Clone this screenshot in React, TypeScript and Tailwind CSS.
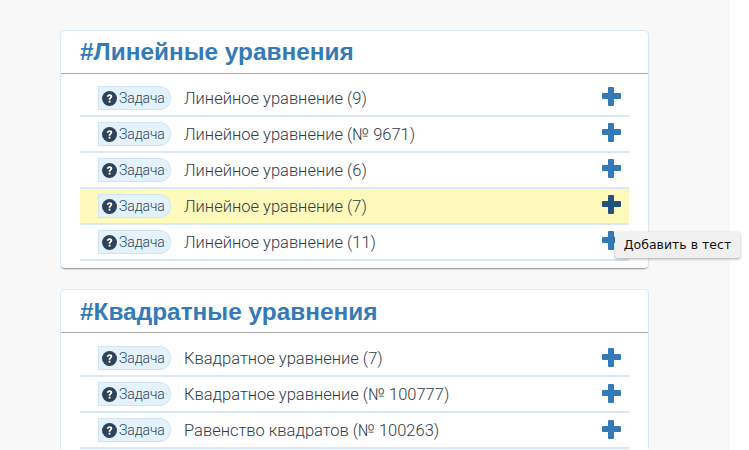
type Task = { title: string; active?: boolean };

const linear: Task[] = [
  { title: 'Линейное уравнение (9)' },
  { title: 'Линейное уравнение (№ 9671)' },
  { title: 'Линейное уравнение (6)' },
  { title: 'Линейное уравнение (7)', active: true },
  { title: 'Линейное уравнение (11)' },
];

const quadratic: Task[] = [
  { title: 'Квадратное уравнение (7)' },
  { title: 'Квадратное уравнение (№ 100777)' },
  { title: 'Равенство квадратов (№ 100263)' },
];

function QuestionIcon() {
  return (
    <svg viewBox="0 0 14 14" className="h-[15px] w-[15px] shrink-0">
      <circle cx="7" cy="7" r="7" fill="#2f4358" />
      <path d="M4.5 5.4c.1-1.5 1.2-2.3 2.6-2.3 1.4 0 2.5.8 2.5 2 0 1.8-1.8 1.7-1.8 3.1H6.2c0-2 1.5-2 1.5-3 0-.4-.3-.7-.7-.7-.5 0-.7.4-.8.9H4.500z" fill="#fff" />
      <rect x="6.200" y="9.100" width="1.700" height="1.700" fill="#fff" />
    </svg>
  );
}

function Plus({ dark, low }: { dark?: boolean; low?: boolean }) {
  const color = dark ? 'bg-[#23527c]' : 'bg-[#337ab7]';
  return (
    <div className={`relative h-[19px] w-[19px] ${low ? 'mb-[1px]' : 'mb-[3px]'}`}>
      <div className={`absolute left-0 top-[6px] h-[6px] w-[19px] rounded-[1px] ${color}`} />
      <div className={`absolute left-[6px] top-0 h-[19px] w-[6px] rounded-[1px] ${color}`} />
    </div>
  );
}

function Row({ task, low }: { task: Task; low?: boolean }) {
  return (
    <li
      className={`flex h-9 items-center border-b-2 border-[#d9e8f5] pl-[18px] pr-[8px] ${
        task.active ? 'bg-[#fdfabc]' : ''
      }`}
    >
      <span className="flex h-6 w-[73px] shrink-0 items-center gap-[2px] rounded-l-[3px] rounded-r-full border border-[#cfe4f5] bg-[#e3f2fd] pl-[3px] font-['Roboto',sans-serif] text-[14px] font-light tracking-[-0.1px] text-[#2f4358]">
        <QuestionIcon />
        Задача
      </span>
      <span className="ml-[13px] flex-1 pt-[2px] font-['Roboto',sans-serif] text-[16.5px] font-light text-[#2f3b48]">
        {task.title}
      </span>
      <Plus dark={task.active} low={low} />
    </li>
  );
}

function Card({ title, tasks, open }: { title: string; tasks: Task[]; open?: boolean }) {
  return (
    <section
      className={`w-[589px] border-x border-t border-[#d9e8f5] bg-white ${
        open ? 'rounded-t-[5px]' : 'rounded-[5px] border-b border-b-[#a9a9a9] pb-[7px] shadow-[0_1px_1px_rgba(0,0,0,0.12)]'
      }`}
    >
      <h2
        className={`flex h-[43px] items-center border-b border-[#a9a9a9] pl-[19px] text-[24.4px] font-bold leading-none text-[#337ab7] ${
          open ? 'pt-[2px]' : ''
        }`}
      >
        {title}
      </h2>
      <ul className={`mx-[19px] ${open ? 'mt-[8px]' : 'mt-[7px]'}`}>
        {tasks.map((t) => (
          <Row key={t.title} task={t} low={open} />
        ))}
      </ul>
    </section>
  );
}

export default function App() {
  return (
    <div className="relative h-[450px] w-[749px] overflow-hidden bg-white font-['Liberation_Sans',sans-serif]">
      <div className="flex h-full w-[730px] flex-col gap-[20px] bg-[#f8f8f8] pl-[60px] pt-[30px]">
        <Card title="#Линейные уравнения" tasks={linear} />
        <Card title="#Квадратные уравнения" tasks={quadratic} open />
      </div>
      <div className="absolute left-[615px] top-[232px] flex h-[26px] w-[125px] items-center justify-center rounded-[2px] bg-[#f0f0f0] font-['DejaVu_Sans',sans-serif] text-[12.5px] text-[#111] shadow-[0_1px_3px_rgba(0,0,0,0.35)]">
        Добавить в тест
      </div>
    </div>
  );
}
